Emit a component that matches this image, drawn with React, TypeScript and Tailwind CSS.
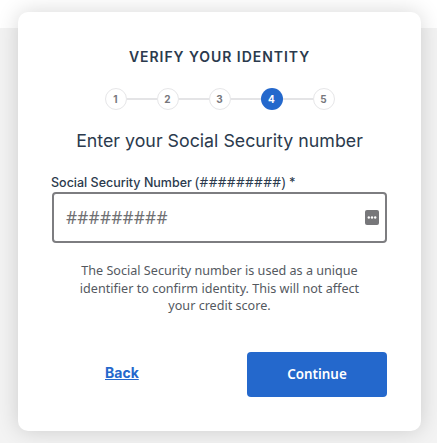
const steps = [1, 2, 3, 4, 5];

function Stepper() {
  return (
    <div className="flex items-center justify-center mt-[22px]">
      {steps.map((step, i) => (
        <div key={step} className="flex items-center">
          {i > 0 && <div className="w-[30px] h-[2px] bg-[#e4e4e6]" />}
          <div
            className={`w-[22px] h-[22px] rounded-full flex items-center justify-center text-[10px] font-bold ${
              step === 4 ? 'bg-[#2468cc] text-white' : 'bg-white border border-[#e6e6e8] text-[#77777c]'
            }`}
          >
            {step}
          </div>
        </div>
      ))}
    </div>
  );
}

export default function App() {
  return (
    <div className="w-[437px] h-[443px] overflow-hidden pt-3 pl-[18px] bg-[linear-gradient(#ffffff_28px,#f3f3f3_28px)] font-['Inter',sans-serif]">
      <div className="w-[403px] h-[419px] bg-white rounded-[10px] shadow-[0_0_22px_rgba(0,0,0,0.16)] flex flex-col">
        <h1 className="mt-[36px] text-center text-[14px] leading-[18px] font-semibold tracking-[0.95px] text-[#2b3a4d]">
          VERIFY YOUR IDENTITY
        </h1>
        <Stepper />
        <h2 className="mt-[19px] text-center text-[17.8px] leading-[24px] font-normal text-[#2b3a4d]">
          Enter your Social Security number
        </h2>
        <label className="mt-[22px] ml-[33px] h-4 text-[12.5px] leading-[16px] font-medium text-[#2b3a4d] whitespace-nowrap">
          Social Security Number <span className="font-['Noto_Sans',sans-serif] font-normal text-[13.6px] leading-none tracking-[0.3px]">(#########)</span> *
        </label>
        <div className="mt-[1px] ml-[34px] w-[335px] h-[51px] rounded-[4px] border-2 border-[#7d7d80] flex items-center justify-between pl-[12px] pr-[6px]">
          <span className="font-['Noto_Sans',sans-serif] text-[17.2px] tracking-[0.2px] text-[#6f6f72]">#########</span>
          <svg width="14" height="15" viewBox="0 0 14 15">
            <rect width="14" height="15" rx="2" fill="#77777a" />
            <circle cx="3.8" cy="7.5" r="1.2" fill="#fff" />
            <circle cx="7" cy="7.5" r="1.2" fill="#fff" />
            <circle cx="10.2" cy="7.5" r="1.2" fill="#fff" />
          </svg>
        </div>
        <p className="mt-[19px] mx-auto w-[290px] text-center font-['Noto_Sans',sans-serif] text-[12.6px] leading-[17.6px] text-[#54595f]">
          The Social Security number is used as a unique identifier to confirm identity. This will not affect your credit score.
        </p>
        <div className="mt-[37px] ml-[33px] flex items-center">
          <a className="w-[196px] pl-[54px] -mt-[4px] text-[14px] font-bold underline text-[#2468cc]">Back</a>
          <button className="w-[140px] h-[45px] rounded-[4px] bg-[#2468cc] text-white font-['Noto_Sans',sans-serif] text-[13.4px] font-semibold">
            Continue
          </button>
        </div>
      </div>
    </div>
  );
}
